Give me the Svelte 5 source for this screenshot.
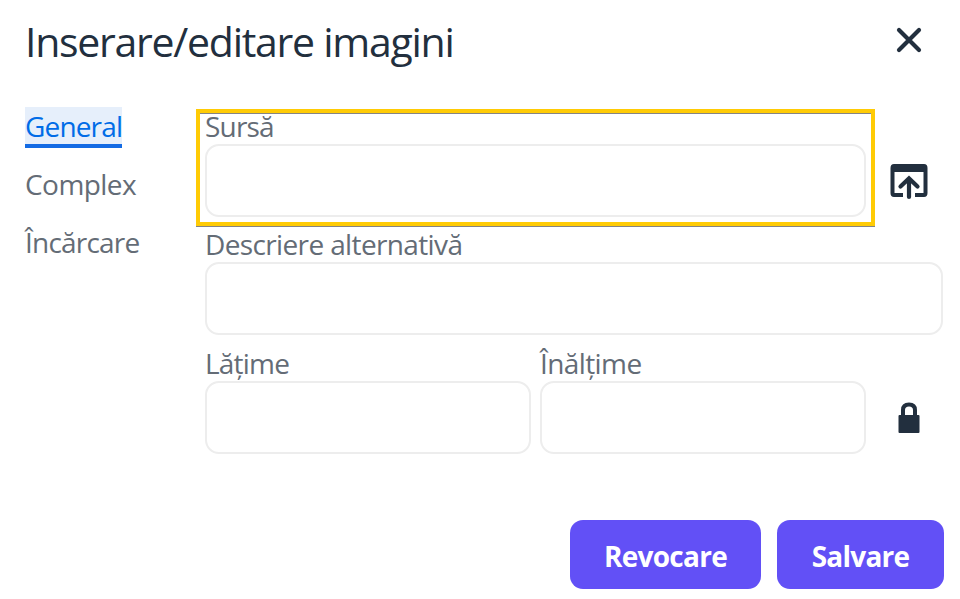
<script>
  const tabs = [
    { name: 'General', active: true, spacing: -0.85 },
    { name: 'Complex', spacing: -0.55 },
    { name: 'Încărcare', spacing: -0.8 }
  ];
</script>

<div class="dialog" role="dialog" aria-label="Inserare/editare imagini">
  <header>
    <h1>Inserare/editare imagini</h1>
    <button class="icon close" aria-label="Închide">
      <svg width="26" height="26" viewBox="0 0 26 26"><path d="M3 3 L23 23 M23 3 L3 23" fill="none" stroke="#222f3e" stroke-width="4.2" stroke-linecap="round" /></svg>
    </button>
  </header>

  <div class="content">
    <nav>
      {#each tabs as tab}
        <button class="tab" class:active={tab.active} style="letter-spacing: {tab.spacing}px">{tab.name}</button>
      {/each}
    </nav>

    <main>
      <div class="row">
        <label class="field source"><span class="sursa">Sursă</span><input type="text" /></label>
        <button class="icon" aria-label="Răsfoiește">
          <svg width="38" height="36" viewBox="0 0 38 36">
            <path fill="#222f3e" fill-rule="evenodd" d="M4 0 H34 Q37.5 0 37.5 4 V29 Q37.5 33 34 33 H25 V29 H33.5 V8 H4.5 V29 H13 V33 H4 Q.5 33 .5 29 V4 Q.5 0 4 0Z" />
            <path d="M19 33 V15 M10.5 22.5 L19 14.5 L27.5 22.5" fill="none" stroke="#222f3e" stroke-width="4.2" stroke-linecap="round" />
          </svg>
        </button>
        <div class="highlight"></div>
      </div>
      <div class="row">
        <label class="field"><span class="alt">Descriere alternativă</span><input type="text" /></label>
      </div>
      <div class="row">
        <label class="field"><span class="width">Lățime</span><input type="text" /></label>
        <label class="field"><span class="height">Înălțime</span><input type="text" /></label>
        <button class="icon" aria-label="Blochează proporțiile">
          <svg class="lock" width="22" height="32" viewBox="0 0 22 32">
            <path fill="#222f3e" fill-rule="evenodd" d="M1.5 13 H3 V8 Q3 0.5 11 0.5 Q19 0.5 19 8 V13 H20.5 Q21.5 13 21.5 14 V30 Q21.5 31 20.5 31 H1.5 Q.5 31 .5 30 V14 Q.5 13 1.5 13Z M7 13 H15 V8 Q15 4.5 11 4.5 Q7 4.5 7 8Z" />
          </svg>
        </button>
      </div>
    </main>
  </div>

  <footer>
    <button class="cancel">Revocare</button>
    <button class="save">Salvare</button>
  </footer>
</div>

<style>
  :global(body) { background: #fff; }
  * { box-sizing: border-box; }
  .dialog {
    width: 960px; height: 599px; overflow: hidden;
    display: flex; flex-direction: column;
    font-family: "Open Sans", "Noto Sans", sans-serif;
    font-size: 28px; color: #222f3e;
  }
  button { font: inherit; border: 0; padding: 0; background: none; }
  header { display: flex; flex: none; justify-content: space-between; height: 106px; padding: 14px 17px 0 25px; }
  h1 { margin: 0; font-size: 41px; line-height: 55px; font-weight: 400; letter-spacing: -1.27px; white-space: nowrap; }
  .icon { display: flex; flex: none; width: 68px; justify-content: center; align-items: center; }
  .close { height: 51px; }
  .content { display: flex; }
  nav { display: flex; flex-direction: column; align-items: flex-start; gap: 17px; width: 205px; padding: 1px 0 0 25px; }
  .tab { height: 41px; line-height: 39px; padding-bottom: 2px; color: #646c76; white-space: nowrap; }
  .active { color: #006ce7; background: #e6effb; border-bottom: 4px solid #136be4; padding: 2px 0 0; line-height: 35px; }
  main { width: 738px; display: flex; flex-direction: column; gap: 9.3px; }
  .row { position: relative; display: flex; gap: 8.6px; height: 109px; }
  .row .icon { height: 73px; margin-top: 39px; }
  .field { flex: 1; min-width: 0; display: flex; flex-direction: column; }
  .field span { height: 38px; line-height: 40px; color: #646c76; white-space: nowrap; letter-spacing: -0.8px; }
  .field .alt { letter-spacing: -0.63px; }
  .field .height { letter-spacing: -0.6px; }
  input { width: 100%; height: 73px; flex: none; border: 2px solid #ededed; border-radius: 14px; background: #fff; padding: 0 20px; font: inherit; }
  .highlight { position: absolute; left: -9px; top: 3px; width: 679px; height: 117px; border: 4px solid #ffcb05; box-shadow: inset 0 1px #848484, 0 1px #848484; pointer-events: none; }
  footer { display: flex; justify-content: flex-end; gap: 16px; padding-right: 16px; margin-top: 68px; }
  footer button { height: 69px; border-radius: 13px; background: #6250f6; color: #fff; font-weight: 700; padding-top: 3px; letter-spacing: -0.75px; }
  .cancel { width: 191px; }
  .save { width: 167px; }
</style>
